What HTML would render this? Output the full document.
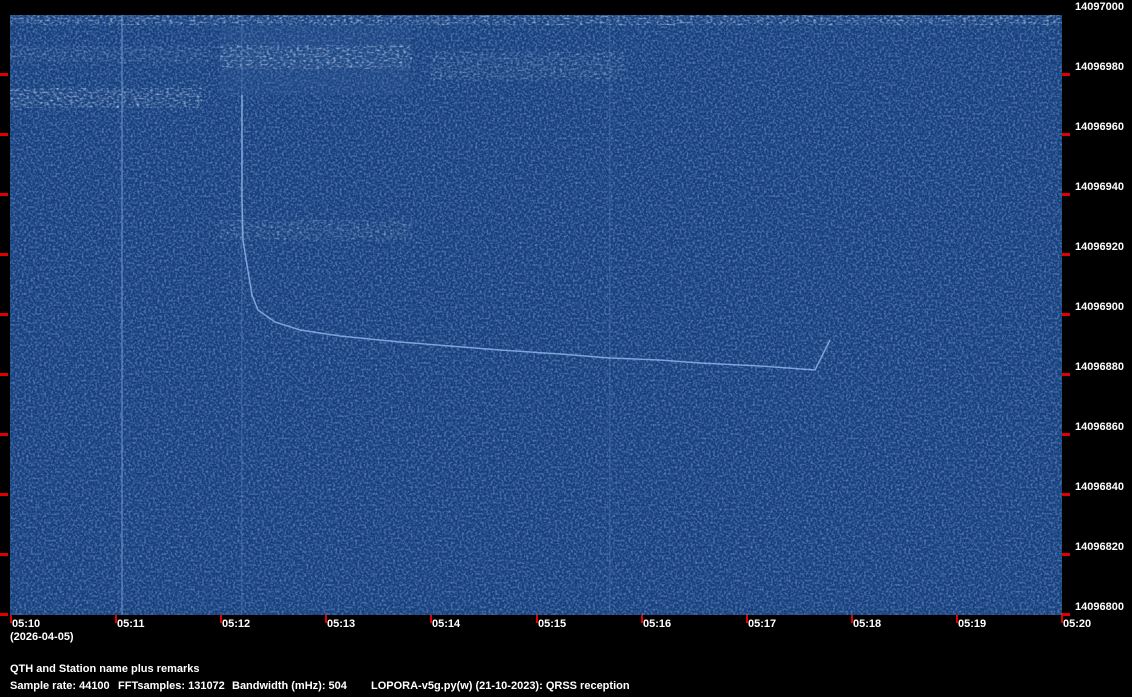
<!DOCTYPE html>
<html><head><meta charset="utf-8"><style>
html,body{margin:0;padding:0;background:#000;width:1132px;height:697px;overflow:hidden;position:relative;font-family:"Liberation Sans",sans-serif;font-weight:bold;font-size:11px;color:#fff}
.t{position:absolute;white-space:pre;line-height:12px}
.r{position:absolute;background:#e00000}
</style></head><body>
<svg width="1132" height="697" style="position:absolute;left:0;top:0">
<defs>
<filter id="n" x="0" y="0" width="100%" height="100%">
<feTurbulence type="fractalNoise" baseFrequency="0.45" numOctaves="2" seed="3"/>
<feColorMatrix type="matrix" values="0 0 0 0 0.35  0 0 0 0 0.5  0 0 0 0 0.8  0 0 0 1.2 -0.5"/>
</filter>
<filter id="b" x="0" y="0" width="100%" height="100%">
<feTurbulence type="fractalNoise" baseFrequency="0.3 0.5" numOctaves="1" seed="7"/>
<feColorMatrix type="matrix" values="0 0 0 0 0.8  0 0 0 0 0.9  0 0 0 0 1  0 0 0 2.2 -1.1"/>
</filter>
</defs>
<rect x="10" y="15" width="1052" height="600" fill="#16407e"/>
<rect x="10" y="15" width="1052" height="600" filter="url(#n)"/>
<rect x="10" y="15" width="1052" height="10" filter="url(#b)" opacity="0.8"/>
<rect x="220" y="25" width="190" height="70" fill="#3a64a0" opacity="0.2"/>
<rect x="220" y="45" width="192" height="24" filter="url(#b)" opacity="0.8"/>
<rect x="10" y="46" width="200" height="16" filter="url(#b)" opacity="0.4"/>
<rect x="430" y="52" width="195" height="28" filter="url(#b)" opacity="0.5"/>
<rect x="10" y="88" width="192" height="20" filter="url(#b)" opacity="0.8"/>
<rect x="220" y="220" width="192" height="20" filter="url(#b)" opacity="0.45"/>
<rect x="121" y="15" width="2" height="600" fill="#6f98cc" opacity="0.5"/>
<rect x="241" y="15" width="1.5" height="600" fill="#5f88c0" opacity="0.35"/>
<rect x="609" y="15" width="1.5" height="600" fill="#5f88c0" opacity="0.3"/>
<polyline fill="none" stroke="#8db4e6" stroke-width="1.5" opacity="0.85" points="242,95 242,200 243,240 247,265 252,295 258,310 275,322 300,330 340,336 400,342 450,346 500,350 560,354 610,358 660,360 700,363 760,366 815,370 830,340"/>
</svg>
<div class="t" style="left:1075px;top:1px">14097000</div>
<div class="t" style="left:1075px;top:61px">14096980</div>
<div class="t" style="left:1075px;top:121px">14096960</div>
<div class="t" style="left:1075px;top:181px">14096940</div>
<div class="t" style="left:1075px;top:241px">14096920</div>
<div class="t" style="left:1075px;top:301px">14096900</div>
<div class="t" style="left:1075px;top:361px">14096880</div>
<div class="t" style="left:1075px;top:421px">14096860</div>
<div class="t" style="left:1075px;top:481px">14096840</div>
<div class="t" style="left:1075px;top:541px">14096820</div>
<div class="t" style="left:1075px;top:601px">14096800</div>
<div class="r" style="left:0;top:73px;width:8px;height:3px"></div><div class="r" style="left:1062px;top:73px;width:8px;height:3px"></div>
<div class="r" style="left:0;top:133px;width:8px;height:3px"></div><div class="r" style="left:1062px;top:133px;width:8px;height:3px"></div>
<div class="r" style="left:0;top:193px;width:8px;height:3px"></div><div class="r" style="left:1062px;top:193px;width:8px;height:3px"></div>
<div class="r" style="left:0;top:253px;width:8px;height:3px"></div><div class="r" style="left:1062px;top:253px;width:8px;height:3px"></div>
<div class="r" style="left:0;top:313px;width:8px;height:3px"></div><div class="r" style="left:1062px;top:313px;width:8px;height:3px"></div>
<div class="r" style="left:0;top:373px;width:8px;height:3px"></div><div class="r" style="left:1062px;top:373px;width:8px;height:3px"></div>
<div class="r" style="left:0;top:433px;width:8px;height:3px"></div><div class="r" style="left:1062px;top:433px;width:8px;height:3px"></div>
<div class="r" style="left:0;top:493px;width:8px;height:3px"></div><div class="r" style="left:1062px;top:493px;width:8px;height:3px"></div>
<div class="r" style="left:0;top:553px;width:8px;height:3px"></div><div class="r" style="left:1062px;top:553px;width:8px;height:3px"></div>
<div class="r" style="left:0;top:613px;width:8px;height:3px"></div><div class="r" style="left:1062px;top:613px;width:8px;height:3px"></div>
<div class="r" style="left:10px;top:615px;width:2px;height:8px"></div>
<div class="r" style="left:115px;top:615px;width:2px;height:8px"></div>
<div class="r" style="left:220px;top:615px;width:2px;height:8px"></div>
<div class="r" style="left:325px;top:615px;width:2px;height:8px"></div>
<div class="r" style="left:430px;top:615px;width:2px;height:8px"></div>
<div class="r" style="left:536px;top:615px;width:2px;height:8px"></div>
<div class="r" style="left:641px;top:615px;width:2px;height:8px"></div>
<div class="r" style="left:746px;top:615px;width:2px;height:8px"></div>
<div class="r" style="left:851px;top:615px;width:2px;height:8px"></div>
<div class="r" style="left:956px;top:615px;width:2px;height:8px"></div>
<div class="r" style="left:1061px;top:615px;width:2px;height:8px"></div>
<div class="t" style="left:12px;top:618px">05:10</div>
<div class="t" style="left:117px;top:618px">05:11</div>
<div class="t" style="left:222px;top:618px">05:12</div>
<div class="t" style="left:327px;top:618px">05:13</div>
<div class="t" style="left:432px;top:618px">05:14</div>
<div class="t" style="left:538px;top:618px">05:15</div>
<div class="t" style="left:643px;top:618px">05:16</div>
<div class="t" style="left:748px;top:618px">05:17</div>
<div class="t" style="left:853px;top:618px">05:18</div>
<div class="t" style="left:958px;top:618px">05:19</div>
<div class="t" style="left:1063px;top:618px">05:20</div>
<div class="t" style="left:10px;top:631px">(2026-04-05)</div>
<div class="t" style="left:10px;top:663px">QTH and Station name plus remarks</div>
<div class="t" style="left:10px;top:680px">Sample rate: 44100</div>
<div class="t" style="left:118px;top:680px">FFTsamples: 131072</div>
<div class="t" style="left:232px;top:680px">Bandwidth (mHz): 504</div>
<div class="t" style="left:371px;top:680px">LOPORA-v5g.py(w) (21-10-2023): QRSS reception</div>
</body></html>
